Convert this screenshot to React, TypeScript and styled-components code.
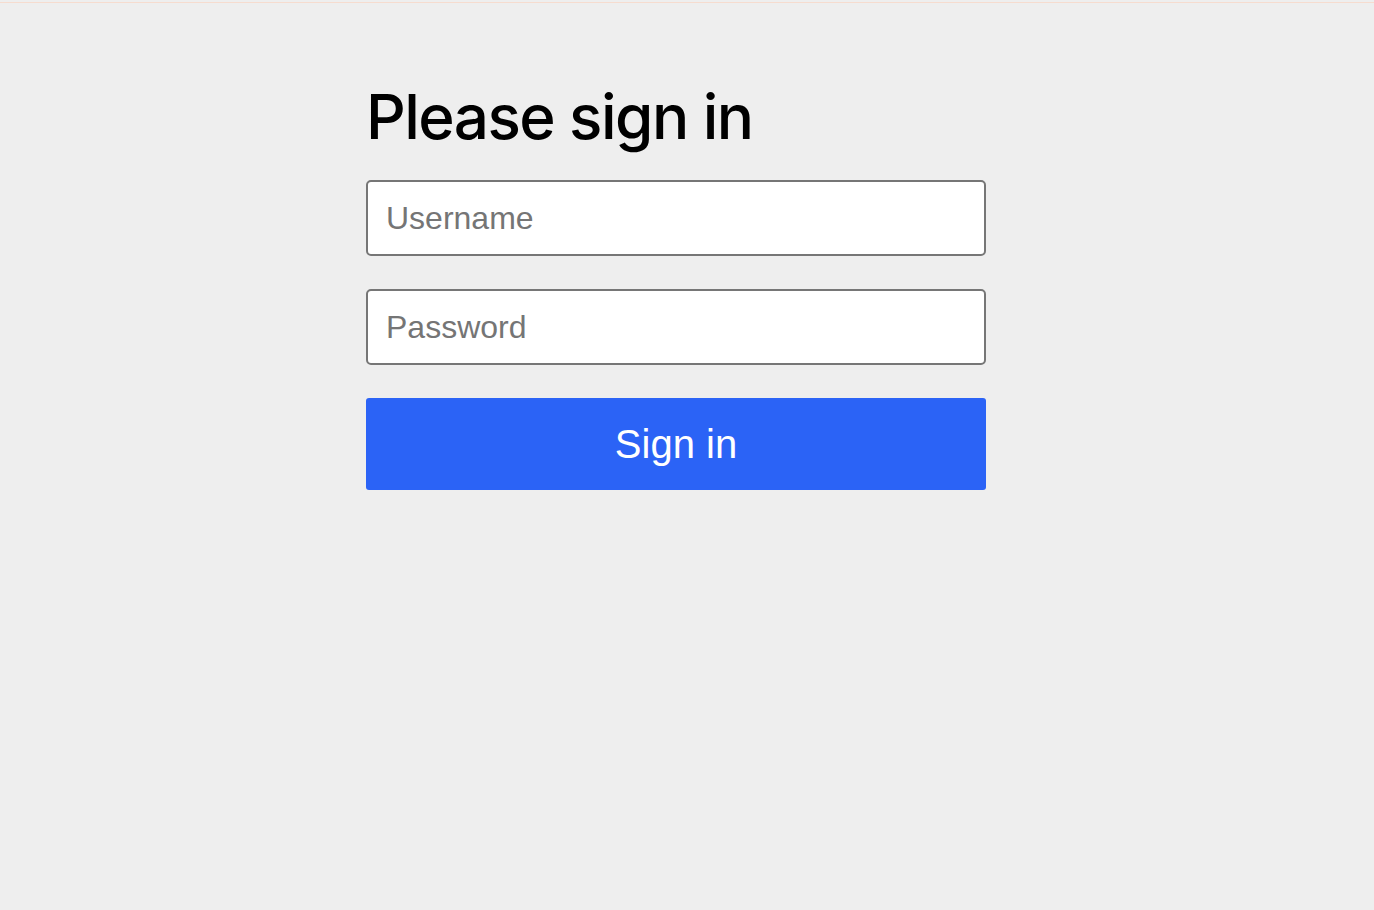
import React from "react";
import styled, { createGlobalStyle } from "styled-components";

const GlobalStyle = createGlobalStyle`
  html, body {
    margin: 0;
    padding: 0;
    background: #eeeeee;
  }
  * { box-sizing: border-box; }
`;

const Page = styled.div`
  min-height: 100vh;
  background: #eeeeee;
  padding-top: 2px;
`;

const TopLine = styled.div`
  height: 1px;
  background: #f6dccf;
`;

const Form = styled.form`
  width: 620px;
  margin-left: calc(50% - 321px);
  padding-top: 76px;
  display: flex;
  flex-direction: column;
`;

const Heading = styled.h1`
  margin: 0 0 25px 0;
  font-family: Inter, "Noto Sans", sans-serif;
  font-weight: 500;
  font-size: 62px;
  line-height: 76px;
  letter-spacing: -1.55px;
  color: #000;
`;

const Input = styled.input`
  display: block;
  width: 100%;
  height: 76px;
  margin: 0 0 33px 0;
  padding: 1px 18px 0 18px;
  border: 2px solid #767676;
  border-radius: 5px;
  background: #fff;
  font-family: "Liberation Sans", Arial, sans-serif;
  font-size: 32px;
  color: #000;
  outline: none;

  &::placeholder {
    color: #757575;
  }
`;

const Button = styled.button`
  width: 100%;
  height: 92px;
  border: none;
  border-radius: 3px;
  background: #2b63f6;
  color: #fff;
  font-family: "Liberation Sans", Arial, sans-serif;
  font-size: 40px;
  padding: 1px 0 0 0;
  cursor: pointer;
`;

export default function App() {
  return (
    <>
      <GlobalStyle />
      <Page>
        <TopLine />
        <Form onSubmit={(e) => e.preventDefault()}>
          <Heading>Please sign in</Heading>
          <Input type="text" placeholder="Username" />
          <Input type="password" placeholder="Password" />
          <Button type="submit">Sign in</Button>
        </Form>
      </Page>
    </>
  );
}
